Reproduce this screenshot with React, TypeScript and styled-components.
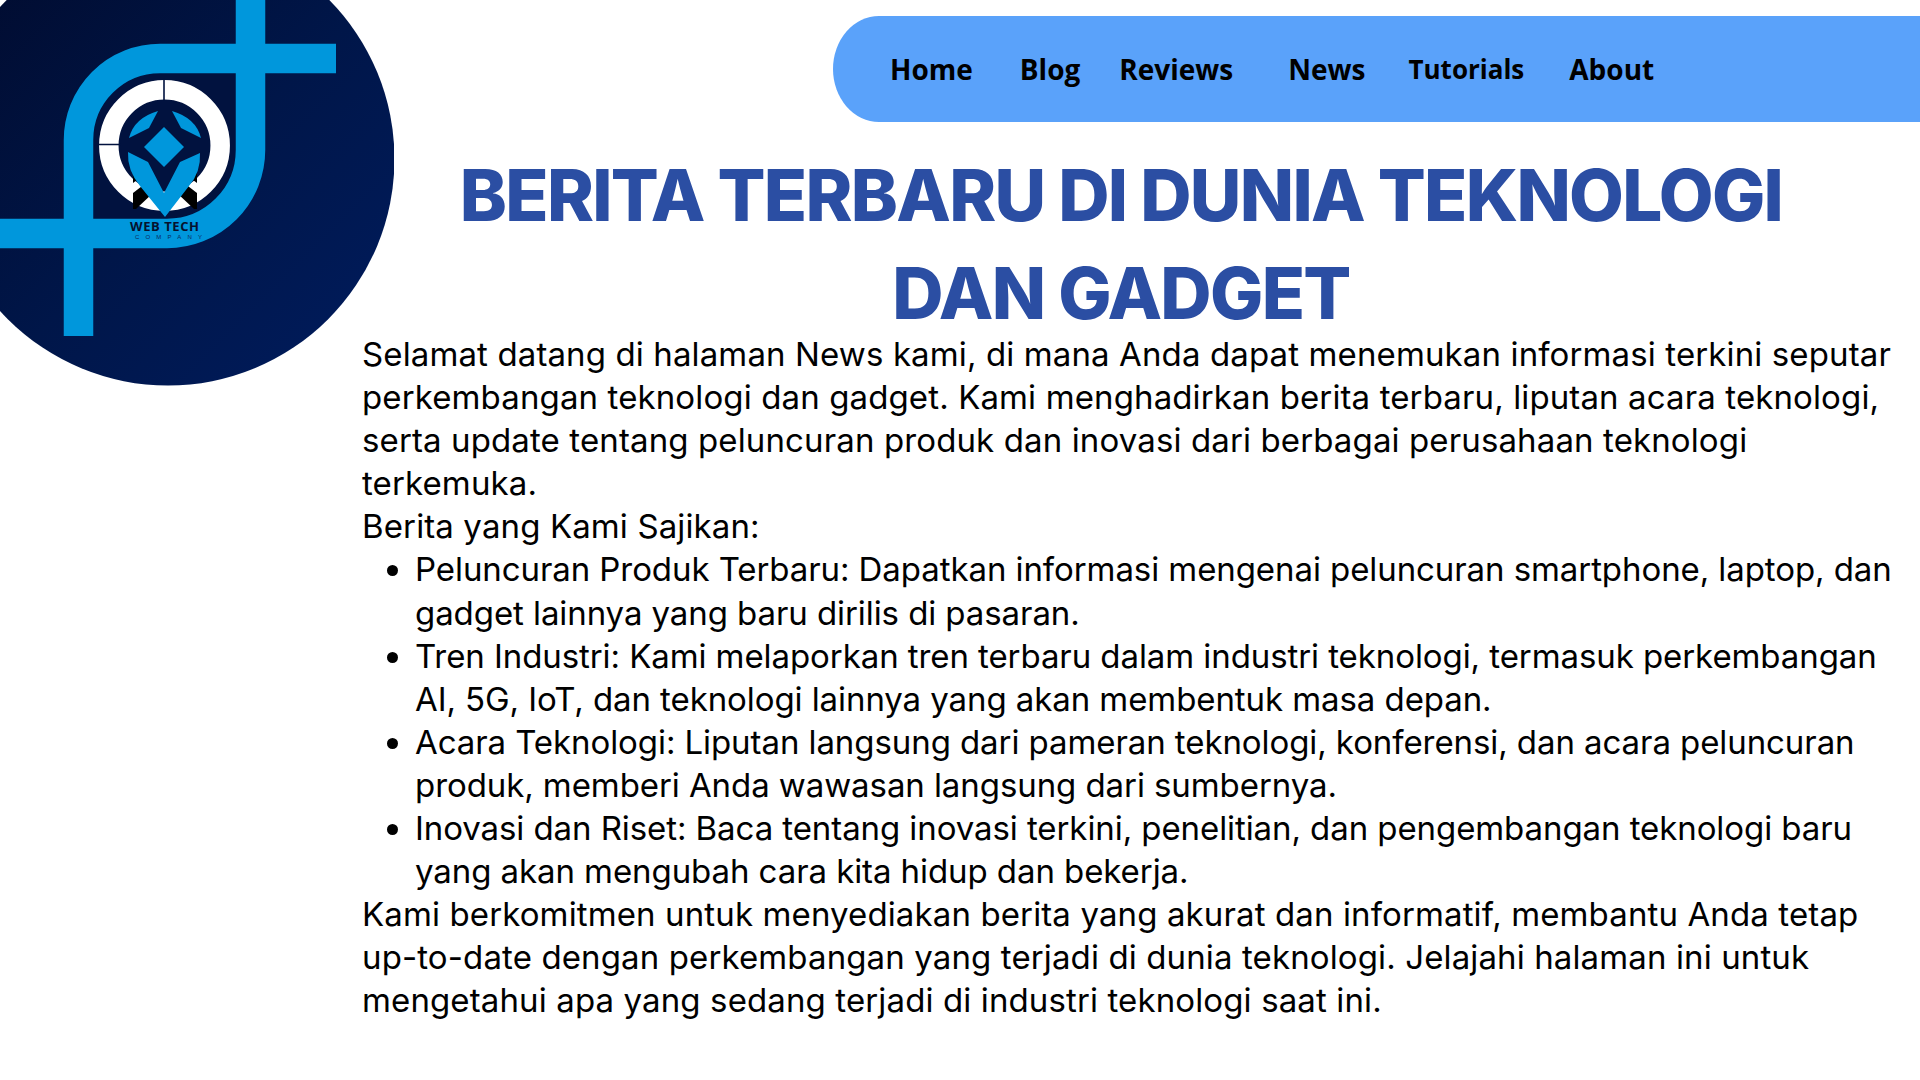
import { FC } from 'react'
import styled, { createGlobalStyle } from 'styled-components'

const GlobalStyle = createGlobalStyle`
  html, body {
    margin: 0;
    padding: 0;
    background: #fff;
    overflow: hidden;
  }
`

const navItems = [
  { label: 'Home', gap: 47, size: 28 },
  { label: 'Blog', gap: 39, size: 28 },
  { label: 'Reviews', gap: 55, size: 28 },
  { label: 'News', gap: 43, size: 28 },
  { label: 'Tutorials', gap: 45, size: 26 },
  { label: 'About', gap: 0, size: 28 },
]

const bullets = [
  'Peluncuran Produk Terbaru: Dapatkan informasi mengenai peluncuran smartphone, laptop, dan gadget lainnya yang baru dirilis di pasaran.',
  'Tren Industri: Kami melaporkan tren terbaru dalam industri teknologi, termasuk perkembangan AI, 5G, IoT, dan teknologi lainnya yang akan membentuk masa depan.',
  'Acara Teknologi: Liputan langsung dari pameran teknologi, konferensi, dan acara peluncuran produk, memberi Anda wawasan langsung dari sumbernya.',
  'Inovasi dan Riset: Baca tentang inovasi terkini, penelitian, dan pengembangan teknologi baru yang akan mengubah cara kita hidup dan bekerja.',
]

const Logo: FC = () => (
  <LogoSvg viewBox='0 0 394 386'>
    <defs>
      <linearGradient id='logoBg' x1='0' y1='0' x2='1' y2='1'>
        <stop offset='0' stopColor='#010a2b' />
        <stop offset='0.55' stopColor='#001649' />
        <stop offset='1' stopColor='#001c5e' />
      </linearGradient>
    </defs>
    <circle cx='168' cy='159' r='226.5' fill='url(#logoBg)' />
    <rect x='93' y='73' width='143' height='146' fill='#01123f' />
    <g fill='none' stroke='#0097dc' strokeWidth='29.5'>
      <path d='M336 58.5H160A81.5 81.5 0 0 0 78.5 140V336' />
      <path d='M250.5 0V150A83.5 83.5 0 0 1 167 233.5H0' />
    </g>
    <circle cx='164.5' cy='145.5' r='55.7' fill='none' stroke='#fff' strokeWidth='19.5' />
    <path d='M164 78V101M97 144.5H121' stroke='#01123f' strokeWidth='1.6' />
    <g fill='#000'>
      <path d='M133 167L141 177L133 183Z' />
      <path d='M133 193L146 183L153 193L136 209H133Z' />
      <path d='M197 167L189 177L197 183Z' />
      <path d='M197 193L184 183L177 193L194 209H197Z' />
    </g>
    <g fill='#0097dc'>
      <path d='M164 127L184 147L164 167L144 147Z' />
      <path d='M158 111L149 128L129 138Q134 118 158 111Z' />
      <path d='M172 111L181 128L201 138Q196 118 172 111Z' />
      <path d='M128 152L148 162L164 193L180 162L200 153Q201 172 189 186L165 217L140 186Q127 170 128 152Z' />
    </g>
    <LogoName x='130' y='231' textLength='69'>
      WEB TECH
    </LogoName>
    <LogoTagline x='135' y='239' textLength='67'>
      COMPANY
    </LogoTagline>
  </LogoSvg>
)

const App: FC = () => (
  <Page>
    <GlobalStyle />
    <Aside>
      <Logo />
    </Aside>
    <Main>
      <NavBar>
        {navItems.map((item) => (
          <NavLink key={item.label} $gap={item.gap} $size={item.size}>
            {item.label}
          </NavLink>
        ))}
      </NavBar>
      <Title>
        BERITA TERBARU DI DUNIA TEKNOLOGI
        <br />
        DAN GADGET
      </Title>
      <Content>
        <p>
          Selamat datang di halaman News kami, di mana Anda dapat menemukan informasi terkini seputar
          perkembangan teknologi dan gadget. Kami menghadirkan berita terbaru, liputan acara teknologi,
          serta update tentang peluncuran produk dan inovasi dari berbagai perusahaan teknologi
          terkemuka.
        </p>
        <p>Berita yang Kami Sajikan:</p>
        <ul>
          {bullets.map((text) => (
            <li key={text}>{text}</li>
          ))}
        </ul>
        <p>
          Kami berkomitmen untuk menyediakan berita yang akurat dan informatif, membantu Anda tetap
          <br />
          up-to-date dengan perkembangan yang terjadi di dunia teknologi. Jelajahi halaman ini untuk
          mengetahui apa yang sedang terjadi di industri teknologi saat ini.
        </p>
      </Content>
    </Main>
  </Page>
)

export default App

const Page = styled.div`
  display: flex;
  width: 1920px;
  height: 1080px;
  overflow: hidden;
`

const Aside = styled.aside`
  flex: 0 0 362px;
  min-width: 0;
  height: 386px;
`

const LogoSvg = styled.svg`
  display: block;
  width: 394px;
  height: 386px;
`

const LogoName = styled.text`
  font-family: 'Open Sans', sans-serif;
  font-size: 13px;
  font-weight: 700;
  fill: #06122e;
`

const LogoTagline = styled.text`
  font-family: 'Liberation Sans', sans-serif;
  font-size: 6px;
  fill: #0a2a60;
`

const Main = styled.main`
  position: relative;
  flex: 1;
  min-width: 0;
  display: flex;
  flex-direction: column;
  padding-top: 16px;
`

const NavBar = styled.nav`
  display: flex;
  align-items: center;
  align-self: flex-end;
  box-sizing: border-box;
  width: 1087px;
  height: 106px;
  padding-left: 57px;
  background-color: #5aa2fa;
  border-radius: 46px 0 0 46px / 53px 0 0 53px;
`

const NavLink = styled.a<{ $gap: number; $size: number }>`
  margin-right: ${(props) => props.$gap}px;
  font-family: 'Open Sans', sans-serif;
  font-size: ${(props) => props.$size}px;
  font-weight: 700;
  color: #000;
`

const Title = styled.h1`
  margin: 24px 0 -9px;
  padding-right: 40px;
  font-family: Inter, sans-serif;
  font-size: 71px;
  font-weight: 800;
  letter-spacing: -1.7px;
  line-height: 98px;
  text-align: center;
  color: #2b4ea3;
`

const Content = styled.div`
  position: relative;
  padding-right: 18px;
  font-family: Inter, sans-serif;
  font-size: 33px;
  letter-spacing: 0.12px;
  line-height: 43.1px;
  color: #000;

  p,
  ul {
    margin: 0;
  }

  ul {
    padding-left: 53px;
    letter-spacing: -0.08px;
  }
`
